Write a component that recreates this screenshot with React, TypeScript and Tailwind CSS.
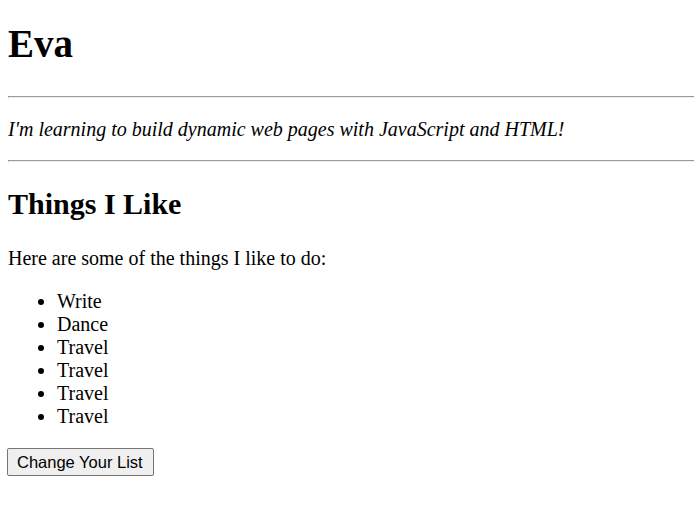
import React from "react";

const things: string[] = ["Write", "Dance", "Travel", "Travel", "Travel", "Travel"];

const App: React.FC = () => {
  return (
    <div className="min-h-[527px] bg-white pl-2 pt-px font-['Liberation_Serif','Times_New_Roman',serif] text-[20px] leading-[23px] text-black">
      {/* Header */}
      <h1 className="mt-[20px] mb-[30px] text-[39px] font-bold leading-[45px]">Eva</h1>
      <hr className="h-0 border-t border-l border-b border-t-[#9a9a9a] border-l-[#9a9a9a] border-b-[#eeeeee]" />
      <p className="mt-[20px] mb-[19px] italic">
        I'm learning to build dynamic web pages with JavaScript and HTML!
      </p>
      <hr className="h-0 border-t border-l border-b border-t-[#9a9a9a] border-l-[#9a9a9a] border-b-[#eeeeee]" />

      {/* Things I like */}
      <h2 className="mt-[25px] mb-[26px] text-[30px] font-bold leading-[34px]">Things I Like</h2>
      <p>Here are some of the things I like to do:</p>
      <ul className="my-[20px] list-disc pl-[49px]">
        {things.map((thing, i) => (
          <li key={i}>{thing}</li>
        ))}
      </ul>
      <button className="-ml-px rounded-[2px] border border-[#767676] bg-[#efefef] pl-[9px] pr-[10px] pt-[3px] pb-[3px] font-['Liberation_Sans',Arial,sans-serif] text-[16.5px] leading-[20px] hover:bg-[#e5e5e5]">
        Change Your List
      </button>
    </div>
  );
};

export default App;
